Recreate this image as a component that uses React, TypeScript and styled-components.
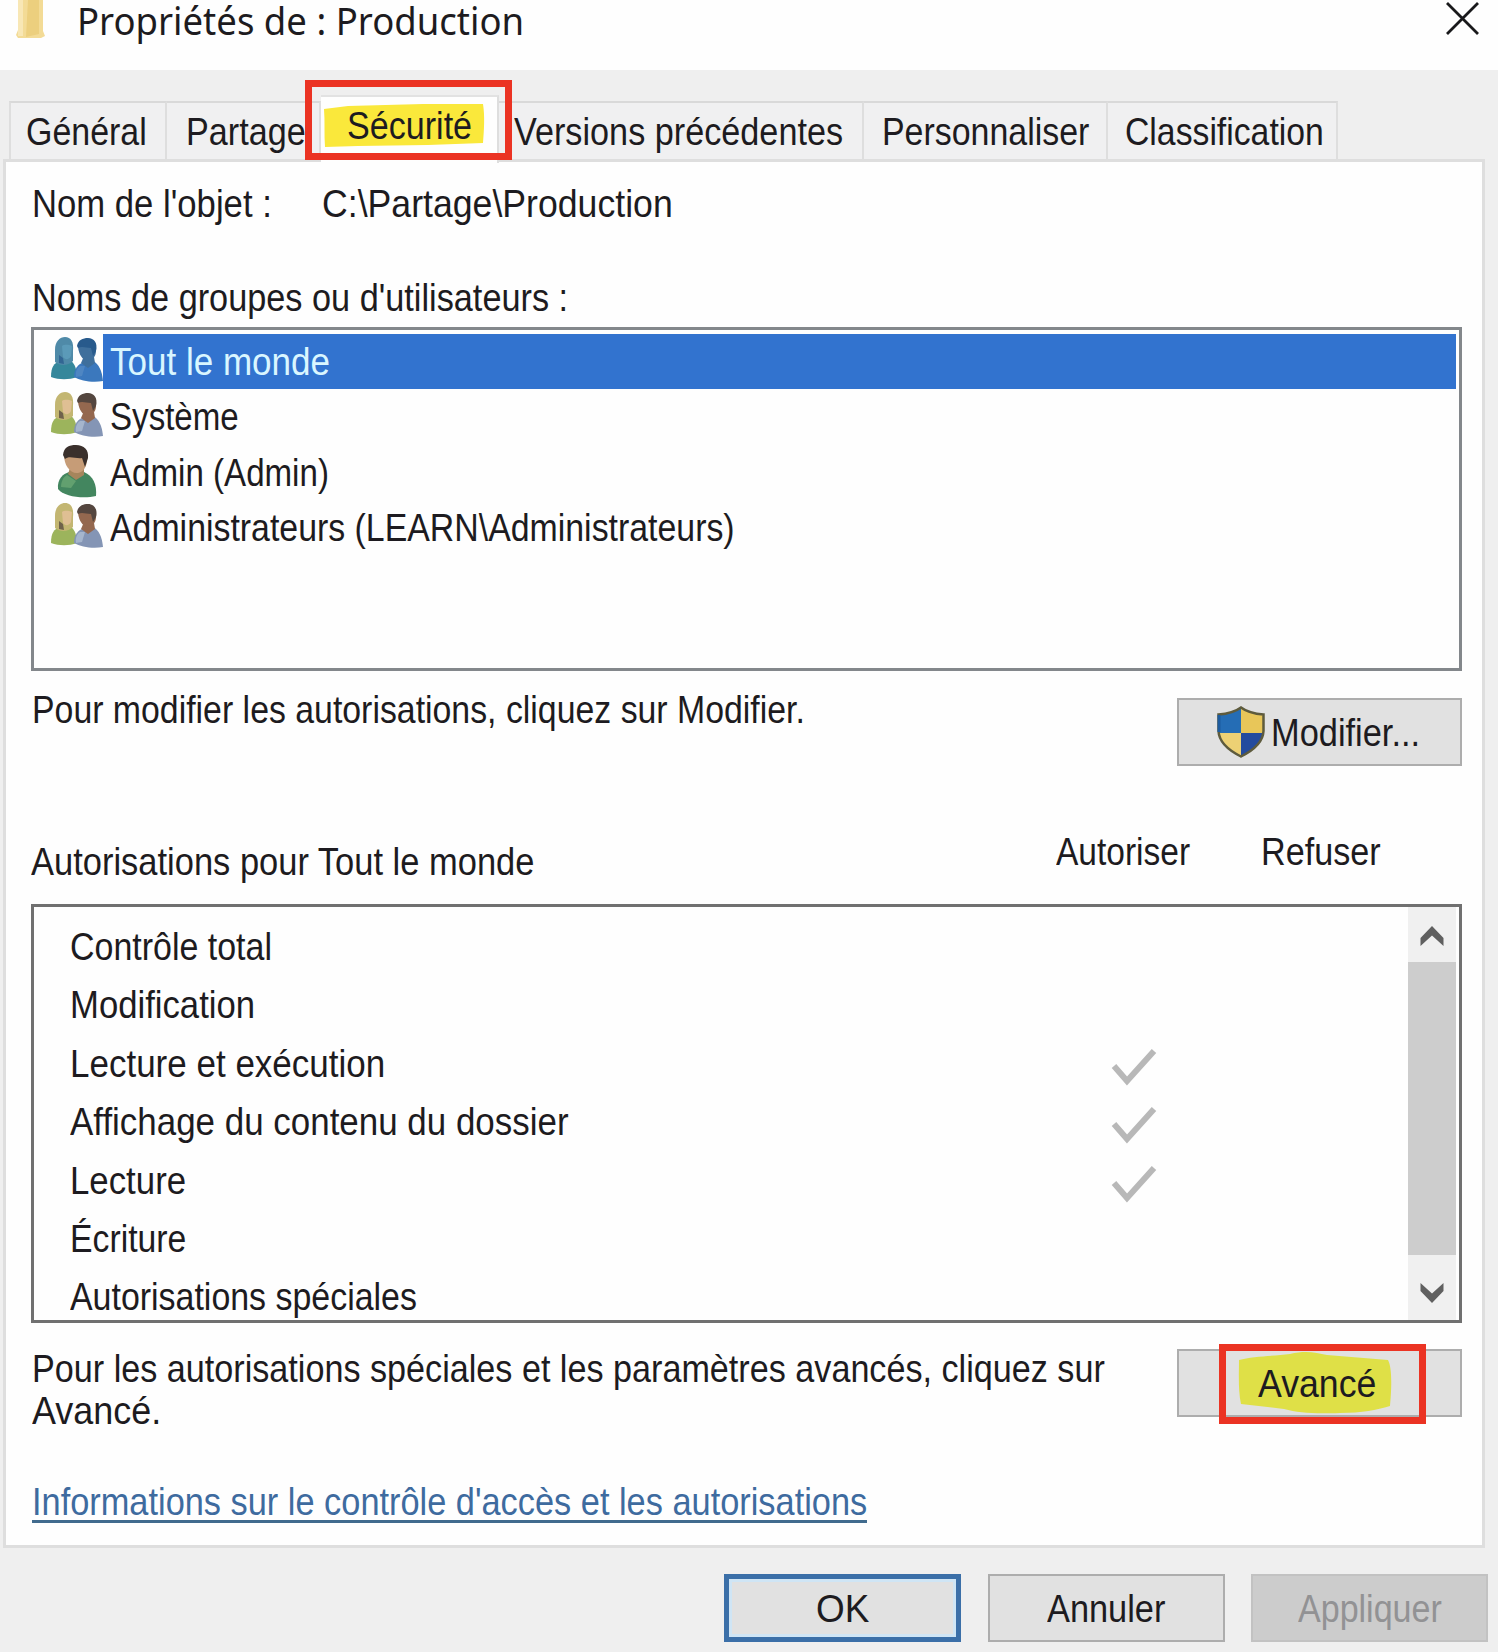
import React, { useLayoutEffect, useRef, useState } from "react";
import styled, { createGlobalStyle, css } from "styled-components";

const GlobalStyle = createGlobalStyle`
  * {
    box-sizing: border-box;
  }
  body {
    margin: 0;
    background: #efefef;
    overflow: hidden;
  }
`;

const Window = styled.main`
  width: 1498px;
  height: 1652px;
  overflow: hidden;
  background: #efefef;
  color: #1d1b20;
  font-family: "Liberation Sans", Arial, sans-serif;
  font-size: 39px;
  line-height: 44px;
`;

// Title bar
const TitleBar = styled.header`
  display: flex;
  align-items: flex-start;
  height: 70px;
  padding: 0 19px 0 14px;
  background: #fefefe;
`;
const FolderIcon = styled.svg`
  width: 33px;
  height: 39px;
  margin-right: 30px;
`;
const Title = styled.h1`
  flex: 1;
  margin: 0;
  font-family: "Noto Sans", "Open Sans", sans-serif;
  font-size: 37.5px;
  font-weight: 400;
  line-height: 42px;
`;
const CloseIcon = styled.svg`
  width: 33px;
  height: 35px;
  margin-top: 1px;
`;

// Tabs
const Tabs = styled.nav`
  display: flex;
  height: 89px;
  padding: 31px 0 0 9px;
`;
const Tab = styled.div<{ $width: number; $indent: number; $active?: boolean }>`
  position: relative;
  width: ${(p) => p.$width}px;
  height: 58px;
  padding: 7px 0 0 ${(p) => p.$indent}px;
  border-top: 2px solid #d9d9d9;
  border-right: 2px solid #dedede;
  background: #f0f0f1;
  &:first-child {
    border-left: 2px solid #dedede;
  }
  ${(p) =>
    p.$active &&
    css`
      z-index: 1;
      height: 68px;
      margin-top: -6px;
      border-top-color: #e2e2e2;
      background: #fefefe;
    `}
`;

// Annotations
const RedFrame = styled.div<{ $top: number; $left: number; $width: number }>`
  position: absolute;
  z-index: 3;
  top: ${(p) => p.$top}px;
  left: ${(p) => p.$left}px;
  width: ${(p) => p.$width}px;
  height: 80px;
  border: 7px solid #eb3323;
`;
const Marker = styled.svg<{ $top: number; $left: number }>`
  position: absolute;
  top: ${(p) => p.$top}px;
  left: ${(p) => p.$left}px;
`;

// Panel
const Panel = styled.section`
  height: 1389px;
  margin: 0 13px 0 3px;
  padding: 20px 20px 0 25px;
  border: 3px solid #dedede;
  background: #fefefe;
`;
const ObjectRow = styled.div`
  display: flex;
  gap: 50px;
  height: 44px;
  padding-left: 1px;
`;
const GroupLabel = styled.div`
  height: 44px;
  margin-top: 50px;
  padding-left: 1px;
`;
const UserList = styled.ul`
  height: 344px;
  margin: 7px 0 0;
  padding: 4px 3px 0 17px;
  border: 3px solid #83878b;
  list-style: none;
`;
const UserRow = styled.li`
  display: flex;
  align-items: center;
  height: 55.3px;
`;
const UserIcon = styled.svg`
  flex: none;
  width: 52px;
  height: 55px;
`;
const UserName = styled.div<{ $selected?: boolean }>`
  flex: 1;
  height: 55px;
  padding: 6px 0 0 7px;
  color: ${(p) => (p.$selected ? "#d9f6ff" : "inherit")};
  background: ${(p) => (p.$selected ? "#3273cf" : "transparent")};
`;
const ActionRow = styled.div<{ $height: number; $top: number }>`
  display: flex;
  justify-content: space-between;
  align-items: flex-start;
  height: ${(p) => p.$height}px;
  padding-top: ${(p) => p.$top}px;
`;
const Paragraph = styled.div`
  display: flex;
  flex-direction: column;
  padding-left: 1px;
  > * + * {
    margin-top: -2px;
  }
`;

const Button = styled.button<{ $width: number; $kind?: "default" | "disabled" }>`
  position: relative;
  display: flex;
  align-items: center;
  justify-content: center;
  width: ${(p) => p.$width}px;
  height: 68px;
  padding: 2px 0 0;
  border: 2.5px solid #adadad;
  background: #e1e1e1;
  color: inherit;
  font: inherit;
  ${(p) =>
    p.$kind === "default" &&
    css`
      border: 5px solid #3b6fa8;
      box-shadow: inset 0 0 0 3px #cfe5f5;
    `}
  ${(p) =>
    p.$kind === "disabled" &&
    css`
      border-color: #c2c2c2;
      background: #cccccc;
      color: #929294;
    `}
`;
const ModifyButton = styled(Button)`
  justify-content: flex-start;
  margin-top: 10px;
  padding: 1px 0 0 38px;
`;
const AdvancedButton = styled(Button)`
  justify-content: flex-start;
  margin-top: 2px;
  padding: 2px 0 0 79px;
`;
const ShieldIcon = styled.svg`
  width: 48px;
  height: 52px;
  margin: -1px 6px 0 0;
`;
const ButtonText = styled.span`
  position: relative;
`;

// Permissions
const PermissionHead = styled.div`
  display: flex;
  height: 139px;
  padding-top: 65px;
`;
const HeadCell = styled.div<{ $width: number; $drop?: boolean }>`
  width: ${(p) => p.$width}px;
  padding-top: ${(p) => (p.$drop ? 10 : 0)}px;
`;
const PermissionBox = styled.div`
  display: flex;
  height: 419px;
  padding-right: 3px;
  border: 3px solid #707070;
  overflow: hidden;
`;
const PermissionList = styled.ul`
  flex: 1;
  margin: 0;
  padding: 18px 0 0 36px;
  list-style: none;
`;
const PermissionRow = styled.li`
  display: flex;
  height: 58.4px;
`;
const PermissionName = styled.div`
  width: 1041px;
`;
const CheckIcon = styled.svg`
  width: 46px;
  height: 40px;
  margin-top: 5px;
`;
const Scrollbar = styled.div`
  display: flex;
  flex-direction: column;
  width: 48px;
  background: #f0f0f0;
`;
const ScrollArrow = styled.svg`
  flex: none;
  width: 48px;
  height: 55px;
`;
const ScrollThumb = styled.div`
  height: 293px;
  background: #cdcdcd;
`;

const HelpLink = styled.a`
  display: block;
  width: 835px;
  height: 43px;
  margin-left: 1px;
  border-bottom: 3px solid #416b8e;
  color: #3e6b9f;
  text-decoration: none;
`;

const Footer = styled.footer`
  display: flex;
  justify-content: flex-end;
  gap: 26.5px;
  padding: 26px 10px 0 0;
`;

const FitBox = styled.span<{ $width: number }>`
  display: block;
  width: ${(p) => p.$width}px;
  white-space: nowrap;
`;
const FitText = styled.span`
  display: inline-block;
  transform-origin: 0 0;
`;

// Text condensed horizontally to a given width
const Fit = ({ width, children }: { width: number; children: React.ReactNode }) => {
  const ref = useRef<HTMLSpanElement>(null);
  const [scale, setScale] = useState(1);

  useLayoutEffect(() => {
    if (ref.current) {
      setScale(width / ref.current.offsetWidth);
    }
  }, [width, children]);

  return (
    <FitBox $width={width}>
      <FitText ref={ref} style={{ transform: `scaleX(${scale})` }}>
        {children}
      </FitText>
    </FitBox>
  );
};

const GroupIcon = ({ selected }: { selected?: boolean }) => {
  const c = selected
    ? { hair: "#4f8aa8", face: "#5b9ab8", body: "#35879b", hair2: "#285a8c", face2: "#3f6f9c", body2: "#3b78bd" }
    : { hair: "#c3b672", face: "#dfbf93", body: "#9cb45c", hair2: "#54463f", face2: "#94684f", body2: "#8495b5" };
  return (
    <UserIcon viewBox="0 0 52 55">
      <path d="M0 43C0 33 3 29 9 27L20 27C24 30 26 36 26 43C18 46 8 46 0 43Z" fill={c.body} />
      <path d="M4 16C4 7 9 3 14 3C20 3 23 8 22 17L22 27C17 32 9 32 4 28Z" fill={c.hair} />
      <path d="M11 12C14 10 18 11 21 12L20 22C18 26 14 26 12 23Z" fill={c.face} />
      <path d="M8 21L12 24L13 30L8 29Z" fill={c.hair2} opacity="0.75" />
      <path d="M23 43C23 35 27 30 33 28L42 27C48 30 51 37 52 47C42 49 30 47 23 43Z" fill={c.body2} />
      <path d="M30 29L33 22L43 23L44 29L37 34Z" fill={c.face2} />
      <path d="M27 13C27 7 32 4 37 5C43 5 46 10 45 17C45 23 41 26 37 26C32 27 28 21 27 13Z" fill={c.face2} />
      <path d="M26 12C27 6 32 4 37 4C43 4 47 9 45 17L42 22L40 14C35 14 31 12 27 14Z" fill={c.hair2} />
      <path d="M29 32L34 32L31 42L25 43C24 38 26 34 29 32Z" fill="#c5d5e5" opacity={selected ? 0.15 : 0.5} />
    </UserIcon>
  );
};

const PersonIcon = () => (
  <UserIcon viewBox="0 0 52 55">
    <path d="M7 44C6 34 12 29 18 27L33 27C42 31 46 39 45 51C33 54 13 52 7 44Z" fill="#43865f" />
    <path d="M19 23L33 22L33 30L25 35L17 29Z" fill="#a6855c" />
    <path d="M13 10C15 4 31 3 36 10C37 18 34 27 27 28C19 29 13 20 13 10Z" fill="#c69c77" />
    <path d="M12 10C13 2 18 0 25 0C33 0 38 5 37 13L34 22L31 13C25 14 18 10 14 14Z" fill="#3a302c" />
    <path d="M16 30L25 36L20 43L10 42C10 37 12 32 16 30Z" fill="#73ad78" opacity="0.65" />
  </UserIcon>
);

const Shield = () => (
  <ShieldIcon viewBox="0 0 48 52">
    <path d="M24 1C18 6 9 8 1 8V25C2 37 13 45 24 51Z" fill="#256db5" />
    <path d="M24 1C30 6 39 8 47 8V25C46 37 35 45 24 51Z" fill="#e8c659" />
    <path d="M24 27H46C44 39 34 45 24 51Z" fill="#244b9e" />
    <path d="M2 27H24V51C14 45 4 39 2 27Z" fill="#edd174" />
    <path d="M24 1.500C18 6 9 8 1.500 8.500V25C2 37 13 45 24 50.500C35 45 46 37 46.500 25V8.500C39 8 30 6 24 1.500Z" fill="none" stroke="#5e5b3d" strokeWidth="2.500" />
    <path d="M2 9V26" fill="none" stroke="#1d5c9f" strokeWidth="3" />
  </ShieldIcon>
);

const users = [
  { name: "Tout le monde", width: 220, selected: true },
  { name: "Système", width: 129 },
  { name: "Admin (Admin)", width: 219, single: true },
  { name: "Administrateurs (LEARN\\Administrateurs)", width: 625 },
];

const permissions = [
  { name: "Contrôle total", width: 202 },
  { name: "Modification", width: 185 },
  { name: "Lecture et exécution", width: 315, allowed: true },
  { name: "Affichage du contenu du dossier", width: 499, allowed: true },
  { name: "Lecture", width: 116, allowed: true },
  { name: "Écriture", width: 116 },
  { name: "Autorisations spéciales", width: 347 },
];

const App = () => {
  return (
    <Window>
      <GlobalStyle />
      <TitleBar>
        <FolderIcon viewBox="0 0 33 39">
          <path d="M4 0H29V31L31 36L27 38H4L2 35L4 30Z" fill="#f3db96" />
          <path d="M14 0H25V34L12 37Z" fill="#eccf7e" />
          <path d="M4 0H9V36H4Z" fill="#f8e7b5" />
        </FolderIcon>
        <Title>
          <Fit width={447}>Propriétés de : Production</Fit>
        </Title>
        <CloseIcon viewBox="0 0 33 35">
          <path d="M1 2L32 33M32 2L1 33" stroke="#19191b" strokeWidth="2.800" />
        </CloseIcon>
      </TitleBar>

      <Tabs>
        <Tab $width={158} $indent={15}>
          <Fit width={121}>Général</Fit>
        </Tab>
        <Tab $width={154} $indent={19}>
          <Fit width={120}>Partage</Fit>
        </Tab>
        <Tab $width={178} $indent={26} $active>
          <Marker $top={6} $left={2} width="162" height="46" viewBox="0 0 162 46">
            <path d="M1 6L25 3L100 1L160 1C162 13 161 28 160 40L105 42L35 43L2 44C1 32 2 18 1 6Z" fill="#fae83b" />
          </Marker>
          <ButtonText>
            <Fit width={125}>Sécurité</Fit>
          </ButtonText>
          <RedFrame $top={-17} $left={-16} $width={207} />
        </Tab>
        <Tab $width={365} $indent={15}>
          <Fit width={329}>Versions précédentes</Fit>
        </Tab>
        <Tab $width={244} $indent={18}>
          <Fit width={207}>Personnaliser</Fit>
        </Tab>
        <Tab $width={230} $indent={17}>
          <Fit width={199}>Classification</Fit>
        </Tab>
      </Tabs>

      <Panel>
        <ObjectRow>
          <Fit width={240}>Nom de l'objet :</Fit>
          <Fit width={351}>C:\Partage\Production</Fit>
        </ObjectRow>
        <GroupLabel>
          <Fit width={536}>Noms de groupes ou d'utilisateurs :</Fit>
        </GroupLabel>
        <UserList>
          {users.map((user) => (
            <UserRow key={user.name}>
              {user.single ? <PersonIcon /> : <GroupIcon selected={user.selected} />}
              <UserName $selected={user.selected}>
                <Fit width={user.width}>{user.name}</Fit>
              </UserName>
            </UserRow>
          ))}
        </UserList>
        <ActionRow $height={94} $top={17}>
          <Paragraph>
            <Fit width={773}>Pour modifier les autorisations, cliquez sur Modifier.</Fit>
          </Paragraph>
          <ModifyButton $width={285}>
            <Shield />
            <Fit width={149}>Modifier...</Fit>
          </ModifyButton>
        </ActionRow>

        <PermissionHead>
          <HeadCell $width={1025} $drop>
            <Fit width={503}>Autorisations pour Tout le monde</Fit>
          </HeadCell>
          <HeadCell $width={205}>
            <Fit width={134}>Autoriser</Fit>
          </HeadCell>
          <HeadCell $width={129}>
            <Fit width={120}>Refuser</Fit>
          </HeadCell>
        </PermissionHead>
        <PermissionBox>
          <PermissionList>
            {permissions.map((permission) => (
              <PermissionRow key={permission.name}>
                <PermissionName>
                  <Fit width={permission.width}>{permission.name}</Fit>
                </PermissionName>
                {permission.allowed && (
                  <CheckIcon viewBox="0 0 46 40">
                    <path d="M3 19L16 34L43 4" fill="none" stroke="#b8b8b8" strokeWidth="6" />
                  </CheckIcon>
                )}
              </PermissionRow>
            ))}
          </PermissionList>
          <Scrollbar>
            <ScrollArrow viewBox="0 0 48 55">
              <path d="M24 19L35.500 31V39L24 28.500L12.500 39V31Z" fill="#606060" />
            </ScrollArrow>
            <ScrollThumb />
            <ScrollArrow viewBox="0 0 48 55">
              <path d="M24 48L35.500 36V28L24 38.500L12.500 28V36Z" fill="#606060" />
            </ScrollArrow>
          </Scrollbar>
        </PermissionBox>

        <ActionRow $height={157} $top={24}>
          <Paragraph>
            <Fit width={1073}>Pour les autorisations spéciales et les paramètres avancés, cliquez sur</Fit>
            <Fit width={129}>Avancé.</Fit>
          </Paragraph>
          <AdvancedButton $width={285}>
            <Marker $top={0} $left={58} width="158" height="64" viewBox="0 0 158 64">
              <path d="M2 9C16 5 38 5 53 3C70 -1 79 2 90 4L151 9C156 18 154 44 153 55C139 59 126 62 103 62C77 63 62 62 47 58L4 53C1 40 2 22 2 9Z" fill="#dfe047" />
            </Marker>
            <ButtonText>
              <Fit width={118}>Avancé</Fit>
            </ButtonText>
            <RedFrame $top={-7} $left={40} $width={207} />
          </AdvancedButton>
        </ActionRow>
        <HelpLink>
          <Fit width={835}>Informations sur le contrôle d'accès et les autorisations</Fit>
        </HelpLink>
      </Panel>

      <Footer>
        <Button $width={237} $kind="default">
          <Fit width={53}>OK</Fit>
        </Button>
        <Button $width={237}>
          <Fit width={118}>Annuler</Fit>
        </Button>
        <Button $width={237} $kind="disabled">
          <Fit width={144}>Appliquer</Fit>
        </Button>
      </Footer>
    </Window>
  );
};

export default App;
